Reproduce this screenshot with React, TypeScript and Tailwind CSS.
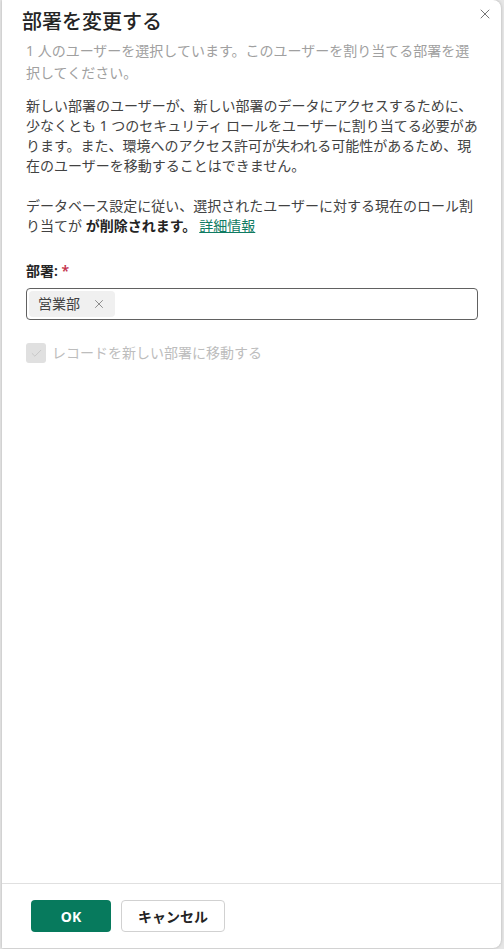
import { X, Check } from "lucide-react";

const font = {
  fontFamily: '"Segoe UI", "Noto Sans", "Noto Sans CJK JP", sans-serif',
};

const App: React.FC = () => {
  return (
    <div className="h-[949px] w-[504px] bg-[#e6e6e6] overflow-hidden" style={font}>
      <div className="relative ml-[2px] flex h-[948px] w-[499px] flex-col rounded-r-lg bg-white shadow-[0_0_3px_rgba(0,0,0,0.25)]">
        {/* Close */}
        <button className="absolute right-[8px] top-[6px] text-[#424242]">
          <X size={16} strokeWidth={1.1} />
        </button>

        {/* Header */}
        <div className="px-[20px] pt-[8px]">
          <h2 className="text-[20px] leading-[28px] font-medium text-[#242424]">部署を変更する</h2>
        </div>

        <div className="flex-1 px-[24px] pr-[23px] text-[14px] leading-[20px]">
          <p className="mt-[4px] leading-[22px] text-[#a0a0a0]">
            1 人のユーザーを選択しています。このユーザーを割り当てる部署を選択してください。
          </p>

          <p className="mt-[12px] text-[#424242]">
            新しい部署のユーザーが、新しい部署のデータにアクセスするために、少なくとも 1 つのセキュリティ ロールをユーザーに割り当てる必要があります。また、環境へのアクセス許可が失われる可能性があるため、現在のユーザーを移動することはできません。
          </p>

          <p className="mt-[20px] text-[#424242]">
            データベース設定に従い、選択されたユーザーに対する現在のロール割り当てが{" "}
            <b className="font-bold text-[#242424]">が削除されます。</b>
            <a href="#" className="ml-[3px] text-[#0f7b62] underline">
              詳細情報
            </a>
          </p>

          {/* Field */}
          <div className="mt-[25px]">
            <label className="block font-semibold text-[#242424]">
              部署: <span className="text-[#c4314b]">*</span>
            </label>
            <div className="mt-[7px] flex h-[32px] items-center rounded-[4px] border border-[#616161] px-[2px]">
              <span className="flex h-[26px] items-center gap-[12px] rounded-[4px] bg-[#f0f0f0] pl-[9px] pr-[9px] text-[#424242]">
                営業部
                <X size={14} strokeWidth={1.2} className="text-[#616161]" />
              </span>
            </div>
          </div>

          {/* Checkbox */}
          <label className="mt-[23px] flex items-center gap-[6px] text-[#bdbdbd]">
            <span className="flex h-[20px] w-[20px] items-center justify-center rounded-[3px] bg-[#e0e0e0]">
              <Check size={13} strokeWidth={1.5} className="text-[#c2c2c2]" />
            </span>
            レコードを新しい部署に移動する
          </label>
        </div>

        {/* Footer */}
        <div className="flex gap-[10px] border-t border-[#e0e0e0] px-[29px] pt-[16px] pb-[16px]">
          <button className="h-[32px] w-[80px] rounded-[4px] bg-[#077a5d] text-[14px] font-bold text-white">
            OK
          </button>
          <button className="h-[32px] w-[104px] rounded-[4px] border border-[#d1d1d1] bg-white text-[14px] font-bold text-[#242424]">
            キャンセル
          </button>
        </div>
      </div>
    </div>
  );
};

export default App;
